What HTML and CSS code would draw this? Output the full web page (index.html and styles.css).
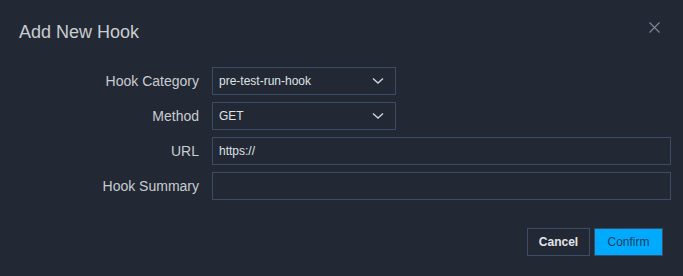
FILE: index.html
```html
<!DOCTYPE html>
<html lang="en">
  <head>
    <meta charset="UTF-8" />
    <title>Add New Hook</title>
    <link rel="stylesheet" href="styles.css">
  </head>
  <body>
    <div class="dialog">
      <div class="dialog-header">
        <h2 class="dialog-title">Add New Hook</h2>
        <button class="close-btn" aria-label="Close">
          <svg width="11" height="11" viewBox="0 0 11 11">
            <path d="M0.5 0.5 L10.5 10.5 M10.5 0.5 L0.5 10.5" stroke="#7c8594" stroke-width="1.2" fill="none" />
          </svg>
        </button>
      </div>

      <form class="hook-form">
        <div class="form-row">
          <label class="form-label">Hook Category</label>
          <div class="select-box">
            <span>pre-test-run-hook</span>
            <svg class="chevron" width="12" height="8" viewBox="0 0 12 8">
              <path d="M1 1.5 L6 6 L11 1.5" stroke="#d0d4da" stroke-width="1.4" fill="none" />
            </svg>
          </div>
        </div>
        <div class="form-row">
          <label class="form-label">Method</label>
          <div class="select-box">
            <span>GET</span>
            <svg class="chevron" width="12" height="8" viewBox="0 0 12 8">
              <path d="M1 1.5 L6 6 L11 1.5" stroke="#d0d4da" stroke-width="1.4" fill="none" />
            </svg>
          </div>
        </div>
        <div class="form-row">
          <label class="form-label">URL</label>
          <input class="text-input" type="text" value="https://" />
        </div>
        <div class="form-row">
          <label class="form-label">Hook Summary</label>
          <input class="text-input" type="text" value="" />
        </div>
      </form>

      <div class="dialog-footer">
        <button class="btn btn-cancel">Cancel</button>
        <button class="btn btn-confirm">Confirm</button>
      </div>
    </div>
  </body>
</html>
```

FILE: styles.css
```css
* {
  box-sizing: border-box;
}

html, body {
  margin: 0;
  padding: 0;
  background-color: #232934;
}

body {
  font-family: "Liberation Sans", Arial, sans-serif;
  width: 683px;
  height: 276px;
  overflow: hidden;
}

.dialog {
  padding: 0 11px 0 19px;
}

.dialog-header {
  display: flex;
  justify-content: space-between;
  align-items: center;
  height: 64px;
}

.dialog-title {
  margin: 0;
  font-size: 18px;
  font-weight: normal;
  color: #c9ccd1;
}

.close-btn {
  background: none;
  border: none;
  padding: 0;
  margin-right: 12px;
  margin-top: -10px;
  cursor: pointer;
  display: flex;
}

.hook-form {
  display: flex;
  flex-direction: column;
  gap: 7px;
  margin-top: 3px;
}

.form-row {
  display: flex;
  align-items: center;
  gap: 13px;
}

.form-label {
  width: 180px;
  flex-shrink: 0;
  text-align: right;
  font-size: 14px;
  color: #c9ccd1;
}

.select-box {
  width: 184px;
  height: 28px;
  border: 1px solid #3b4c69;
  display: flex;
  align-items: center;
  justify-content: space-between;
  padding: 0 11px 0 6px;
  font-size: 12px;
  color: #dfe2e6;
}

.text-input {
  width: 459px;
  height: 28px;
  border: 1px solid #3b4c69;
  background: transparent;
  padding: 0 6px;
  font-family: inherit;
  font-size: 12px;
  color: #dfe2e6;
  outline: none;
}

.dialog-footer {
  display: flex;
  justify-content: flex-end;
  gap: 4px;
  margin-top: 28px;
  padding-right: 9px;
}

.btn {
  height: 28px;
  font-family: inherit;
  font-size: 12px;
  cursor: pointer;
}

.btn-cancel {
  width: 63px;
  background: transparent;
  border: 1px solid #3b4c69;
  color: #e2e4e8;
  font-weight: bold;
}

.btn-confirm {
  width: 69px;
  background-color: #00aaff;
  border: 1px solid #3b4c69;
  color: #1d3f5e;
}
```
